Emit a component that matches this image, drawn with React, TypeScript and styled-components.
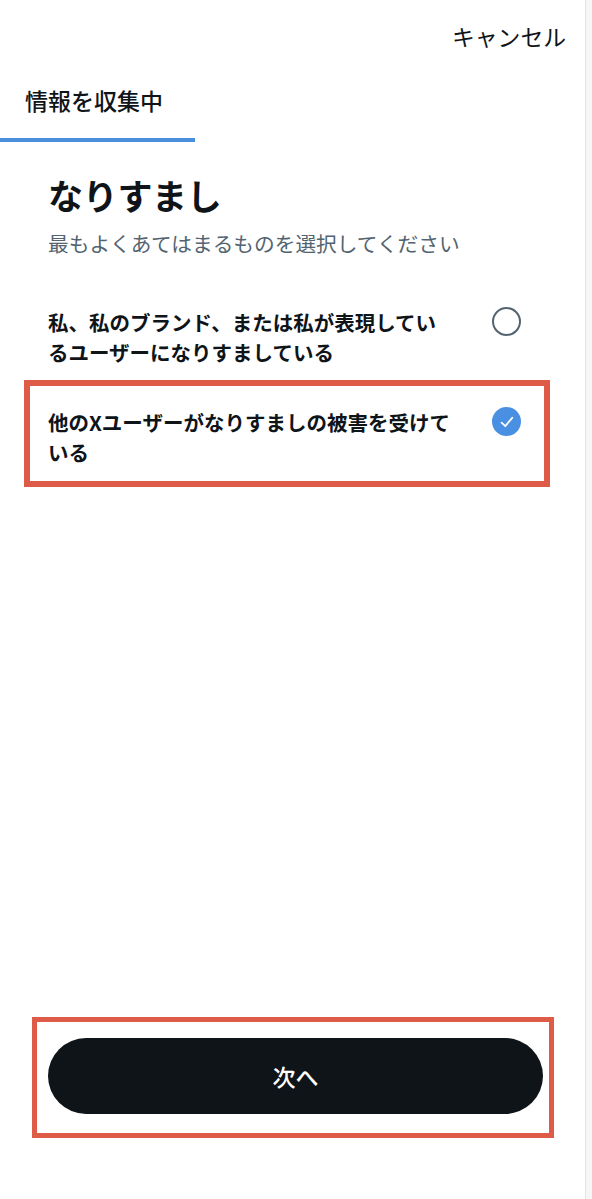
import styled, { createGlobalStyle } from "styled-components"

const GlobalStyle = createGlobalStyle`
  * { box-sizing: border-box; }
  body {
    margin: 0;
    background: #f6f6f6;
    font-family: "Noto Sans CJK JP", "Noto Sans", sans-serif;
    color: #0f1419;
  }
`

interface Option {
  id: string
  label: string
  checked: boolean
  highlighted: boolean
}

const options: Option[] = [
  { id: "self", label: "私、私のブランド、または私が表現しているユーザーになりすましている", checked: false, highlighted: false },
  { id: "other", label: "他のXユーザーがなりすましの被害を受けている", checked: true, highlighted: true },
]

const CheckIcon = () => (
  <svg width="20" height="20" viewBox="0 0 20 20" fill="none">
    <path d="M4.6 10.6 L8.3 14.1 L15.2 5.8" stroke="#fff" strokeWidth="1.8" strokeLinecap="round" strokeLinejoin="round" />
  </svg>
)

const App = () => {
  return (
    <>
      <GlobalStyle />
      <Page>
        <TopBar>
          <CancelButton>キャンセル</CancelButton>
        </TopBar>
        {/* tabs */}
        <TabBar>
          <Tab active>情報を収集中</Tab>
        </TabBar>
        <Content>
          <Title>なりすまし</Title>
          <Subtitle>最もよくあてはまるものを選択してください</Subtitle>
          <OptionList>
            {options.map((o) => (
              <OptionRow key={o.id} highlighted={o.highlighted}>
                <OptionLabel>{o.label}</OptionLabel>
                <Radio checked={o.checked}>{o.checked && <CheckIcon />}</Radio>
              </OptionRow>
            ))}
          </OptionList>
        </Content>
        {/* bottom */}
        <Footer>
          <NextButtonWrap>
            <NextButton>次へ</NextButton>
          </NextButtonWrap>
        </Footer>
      </Page>
    </>
  )
}

export default App

const Page = styled.div`
  width: 586px;
  min-height: 1199px;
  background: #fff;
  border-right: 1px solid #e3e3e3;
  display: flex;
  flex-direction: column;
`

const TopBar = styled.header`
  height: 74px;
  display: flex;
  align-items: center;
  justify-content: flex-end;
  padding-right: 19px;
`

const CancelButton = styled.button`
  border: none;
  background: none;
  padding: 0;
  font-family: inherit;
  font-size: 22.8px;
  font-weight: 400;
  color: #0f1419;
  line-height: 30px;
`

const TabBar = styled.nav`
  display: flex;
  padding-top: 11px;
`

const Tab = styled.div<{ active?: boolean }>`
  width: 195px;
  padding: 0 0 23px 25px;
  font-size: 23px;
  font-weight: 500;
  line-height: 30px;
  border-bottom: 4px solid ${(p) => (p.active ? "#4a8fdb" : "transparent")};
`

const Content = styled.main`
  padding: 31px 41px 0 48px;
`

const Title = styled.h1`
  margin: 0;
  font-size: 35px;
  font-weight: 700;
  line-height: 44px;
  letter-spacing: -0.3px;
`

const Subtitle = styled.p`
  margin: 12px 0 0;
  font-size: 20.7px;
  line-height: 28px;
  color: #536471;
`

const OptionList = styled.div`
  margin-top: 30px;
  display: flex;
  flex-direction: column;
`

const OptionRow = styled.div<{ highlighted: boolean }>`
  position: relative;
  display: flex;
  align-items: flex-start;
  padding: 20px 0;
  &::after {
    content: "";
    display: ${(p) => (p.highlighted ? "block" : "none")};
    position: absolute;
    top: -7px;
    bottom: 0;
    left: -24px;
    right: -6px;
    border: 6px solid #dd5b47;
    pointer-events: none;
  }
`

const OptionLabel = styled.span`
  width: 404px;
  font-size: 20.5px;
  font-weight: 700;
  line-height: 30px;
`

const Radio = styled.span<{ checked: boolean }>`
  margin: 0 23px 0 auto;
  flex-shrink: 0;
  width: 29px;
  height: 29px;
  border-radius: 50%;
  display: flex;
  align-items: center;
  justify-content: center;
  border: ${(p) => (p.checked ? "none" : "2.6px solid #536471")};
  background: ${(p) => (p.checked ? "#4a90e2" : "transparent")};
`

const Footer = styled.footer`
  margin-top: auto;
  padding: 0 42px 85px 48px;
`

const NextButtonWrap = styled.div`
  position: relative;
  &::after {
    content: "";
    position: absolute;
    top: -21px;
    bottom: -24px;
    left: -16px;
    right: -11px;
    border: 5px solid #dd5b47;
    pointer-events: none;
  }
`

const NextButton = styled.button`
  width: 100%;
  height: 76px;
  border: none;
  border-radius: 38px;
  background: #0f1419;
  color: #fff;
  font-family: inherit;
  font-size: 23px;
  font-weight: 500;
`
